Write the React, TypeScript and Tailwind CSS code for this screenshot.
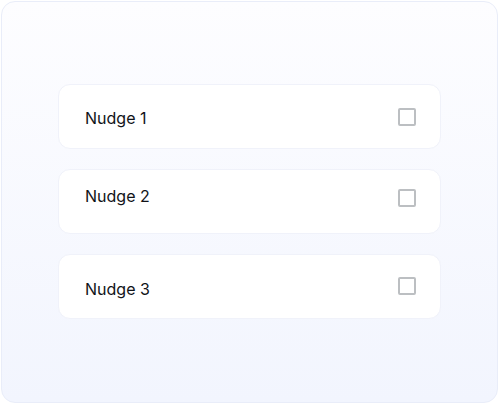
import React from 'react'

type Nudge = {
  label: string
  textOffset: string
  boxOffset: string
}

// each card sits its label/checkbox a little differently, like the capture
const nudges: Nudge[] = [
  { label: 'Nudge 1', textOffset: 'mt-[23px]', boxOffset: 'mt-[23px]' },
  { label: 'Nudge 2', textOffset: 'mt-[16px]', boxOffset: 'mt-[19px]' },
  { label: 'Nudge 3', textOffset: 'mt-[24px]', boxOffset: 'mt-[22px]' },
]

function NudgeCard({ nudge }: { nudge: Nudge }) {
  return (
    <div className="flex h-[65px] items-start justify-between rounded-[12px] border border-[#f0f2fa] bg-white pl-[26px] pr-[24px]">
      <span className={`${nudge.textOffset} text-[16px] leading-[20px] text-[#111318]`}>{nudge.label}</span>
      <span className={`${nudge.boxOffset} block h-[18px] w-[18px] rounded-[2px] border-2 border-[#bcbfc2] bg-white`} />
    </div>
  )
}

export default function App() {
  return (
    <div className="h-[404px] w-[499px] bg-white p-px" style={{ fontFamily: 'Inter, "Noto Sans", sans-serif' }}>
      <div className="h-full w-full rounded-[14px] border border-[#e9edf9] bg-gradient-to-b from-[#fdfdff] to-[#f2f5fe] px-[56px] pt-[82px]">
        <div className="flex flex-col gap-[20px]">
          {nudges.map((n) => (
            <NudgeCard key={n.label} nudge={n} />
          ))}
        </div>
      </div>
    </div>
  )
}
